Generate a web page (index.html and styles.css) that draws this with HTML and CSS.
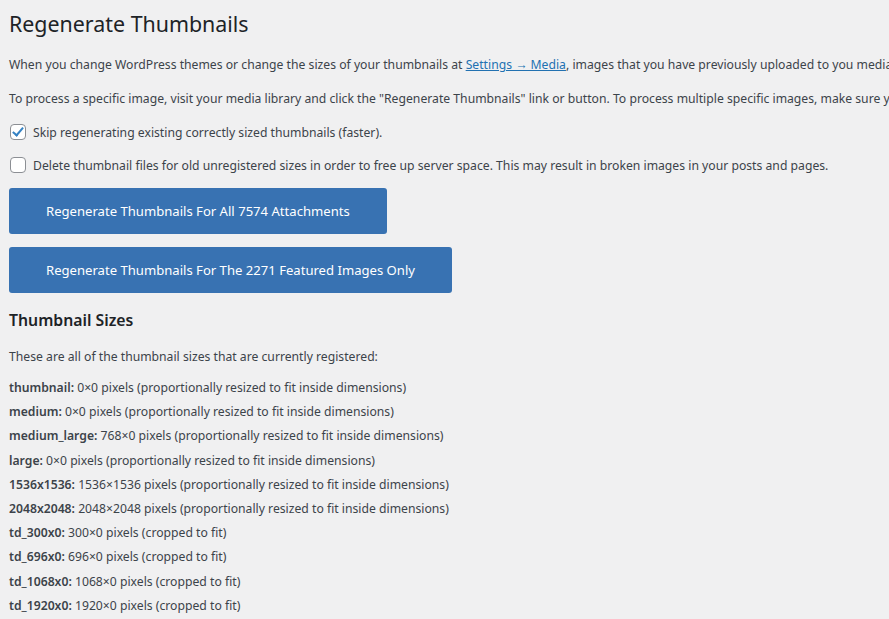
FILE: index.html
```html
<!DOCTYPE html>
<html lang="en">
<head>
  <meta charset="UTF-8">
  <meta name="viewport" content="width=device-width, initial-scale=1.0">
  <title>Regenerate Thumbnails</title>
  <link rel="stylesheet" href="styles.css">
</head>
<body>
  <div class="wrap">
    <h1>Regenerate Thumbnails</h1>

    <p class="intro">When you change WordPress themes or change the sizes of your thumbnails at <a href="#">Settings &rarr; Media</a>, images that you have previously uploaded to you media library will be missing thumbnail files for those new image sizes.</p>
    <p class="intro">To process a specific image, visit your media library and click the "Regenerate Thumbnails" link or button. To process multiple specific images, make sure you're in the list view and then use the Bulk Actions dropdown.</p>

    <label class="option">
      <input type="checkbox" checked>
      <span>Skip regenerating existing correctly sized thumbnails (faster).</span>
    </label>
    <label class="option">
      <input type="checkbox">
      <span>Delete thumbnail files for old unregistered sizes in order to free up server space. This may result in broken images in your posts and pages.</span>
    </label>

    <div class="actions">
      <button class="btn">Regenerate Thumbnails For All 7574 Attachments</button>
      <button class="btn">Regenerate Thumbnails For The 2271 Featured Images Only</button>
    </div>

    <h2>Thumbnail Sizes</h2>
    <p class="sizes-note">These are all of the thumbnail sizes that are currently registered:</p>

    <ul class="sizes">
      <li><strong>thumbnail:</strong> 0&times;0 pixels (proportionally resized to fit inside dimensions)</li>
      <li><strong>medium:</strong> 0&times;0 pixels (proportionally resized to fit inside dimensions)</li>
      <li><strong>medium_large:</strong> 768&times;0 pixels (proportionally resized to fit inside dimensions)</li>
      <li><strong>large:</strong> 0&times;0 pixels (proportionally resized to fit inside dimensions)</li>
      <li><strong>1536x1536:</strong> 1536&times;1536 pixels (proportionally resized to fit inside dimensions)</li>
      <li><strong>2048x2048:</strong> 2048&times;2048 pixels (proportionally resized to fit inside dimensions)</li>
      <li><strong>td_300x0:</strong> 300&times;0 pixels (cropped to fit)</li>
      <li><strong>td_696x0:</strong> 696&times;0 pixels (cropped to fit)</li>
      <li><strong>td_1068x0:</strong> 1068&times;0 pixels (cropped to fit)</li>
      <li><strong>td_1920x0:</strong> 1920&times;0 pixels (cropped to fit)</li>
    </ul>
  </div>
</body>
</html>
```

FILE: styles.css
```css
/* Admin page base */
body {
  font-family: "Noto Sans", "Open Sans", sans-serif;
  font-size: 12.2px;
  margin: 0;
  padding: 0;
  background-color: #f0f0f1;
  color: #3c434a;
  overflow: hidden;
}
.wrap {
  padding: 9px 0 0 9px;
}
h1 {
  font-size: 21.4px;
  font-weight: 400;
  line-height: 30px;
  color: #1d2327;
  margin: 0 0 16px;
}
.intro {
  line-height: 20px;
  margin: 0 0 14px;
  white-space: nowrap;
}
.intro + .intro {
  margin-bottom: 13px;
}
a {
  color: #2271b1;
}

/* Options */
.option {
  display: flex;
  align-items: center;
  gap: 7px;
  height: 20px;
  margin-bottom: 13px;
  white-space: nowrap;
}
.option input {
  appearance: none;
  width: 16px;
  height: 16px;
  margin: 0 0 0 1px;
  border: 1px solid #8c8f94;
  border-radius: 4px;
  background-color: #fff;
  position: relative;
}
.option input:checked::before {
  content: "";
  position: absolute;
  left: 4px;
  top: 0px;
  width: 4px;
  height: 9px;
  border: solid #3582c4;
  border-width: 0 2.5px 2.5px 0;
  transform: rotate(40deg);
}

/* Buttons */
.actions {
  display: flex;
  flex-direction: column;
  align-items: flex-start;
  gap: 13px;
}
.btn {
  font-family: inherit;
  font-size: 13.1px;
  height: 46px;
  padding: 0 37px;
  background-color: #3872b2;
  color: #fff;
  border: none;
  border-radius: 3px;
  cursor: pointer;
}
.btn:hover {
  background-color: #2f65a0;
}

/* Sizes list */
h2 {
  font-size: 15.8px;
  font-weight: 600;
  line-height: 23px;
  color: #1d2327;
  margin: 16px 0 15px;
}
.sizes-note {
  line-height: 20px;
  margin: 0 0 12px;
}
.sizes {
  list-style: none;
  padding: 0;
  margin: 0;
}
.sizes li {
  line-height: 18.2px;
  margin-bottom: 6px;
}
.sizes strong {
  font-weight: 600;
}
```
